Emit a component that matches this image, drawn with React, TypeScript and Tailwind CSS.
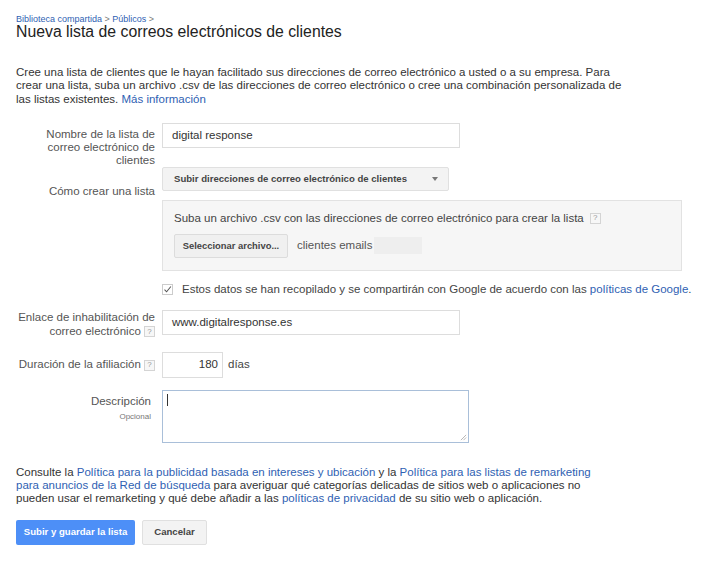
import React from "react";

const Help = () => (
  <span className="inline-flex items-center justify-center w-[11px] h-[11px] border border-[#d4d4d4] bg-[#f7f7f7] text-[8px] leading-none text-[#999] align-middle">
    ?
  </span>
);

export default function App() {
  return (
    <div className="bg-white w-[710px] h-[563px] overflow-hidden px-4 pt-[14px] text-[#333] font-['Liberation_Sans',Arial,sans-serif]">
      {/* Header */}
      <div className="text-[9px] leading-[10px] text-[#2f5fb3]">
        Biblioteca compartida <span className="text-[#777]">&gt;</span> Públicos <span className="text-[#777]">&gt;</span>
      </div>
      <h1 className="text-[15.8px] leading-[16px] text-[#222]">Nueva lista de correos electrónicos de clientes</h1>

      <p className="mt-[26px] text-[11.5px] leading-[13.3px] whitespace-nowrap">
        Cree una lista de clientes que le hayan facilitado sus direcciones de correo electrónico a usted o a su empresa. Para
        <br />
        crear una lista, suba un archivo .csv de las direcciones de correo electrónico o cree una combinación personalizada de
        <br />
        las listas existentes. <span className="text-[#2f5fb3]">Más información</span>
      </p>

      {/* Form */}
      <div className="mt-[17px] flex flex-col text-[11.5px]">
        <div className="flex">
          <div className="w-[139px] text-right text-[#555] leading-[13px] pt-[5px]">
            Nombre de la lista de
            <br />
            correo electrónico de
            <br />
            clientes
          </div>
          <div className="ml-[7px] w-[298px] h-[25px] border border-[#ddd] flex items-center px-[9px] text-[#333]">
            digital response
          </div>
        </div>

        <div className="flex">
          <div className="w-[139px] text-right text-[#555] leading-[13px] pt-[18px]">Cómo crear una lista</div>
          <div className="ml-[7px] flex flex-col">
            <div className="w-[287px] h-[24px] bg-[#f3f3f3] border border-[#e0e0e0] rounded-[2px] flex items-center justify-between pl-[11px] pr-[10px] text-[9.6px] font-bold text-[#444]">
              <span>Subir direcciones de correo electrónico de clientes</span>
              <span className="w-0 h-0 border-l-[3px] border-r-[3px] border-t-[4px] border-l-transparent border-r-transparent border-t-[#777]" />
            </div>
            <div className="mt-[9px] w-[520px] h-[71px] bg-[#f6f6f6] border border-[#e2e2e2] pl-[11px] pt-[11px]">
              <div className="flex items-center gap-[6px] leading-[13px] text-[#444]">
                <span>Suba un archivo .csv con las direcciones de correo electrónico para crear la lista</span>
                <Help />
              </div>
              <div className="mt-[9px] flex items-center">
                <div className="w-[114px] h-[24px] bg-[#f0f0f0] border border-[#dcdcdc] rounded-[2px] flex items-center justify-center text-[9.4px] font-bold text-[#444] whitespace-nowrap">
                  Seleccionar archivo...
                </div>
                <span className="ml-[9px] text-[#555]">clientes emails</span>
                <span className="ml-[2px] w-[48px] h-[17px] bg-[#eeeeee]" />
              </div>
            </div>
          </div>
        </div>

        <div className="flex items-center h-[14px] mt-[12px] ml-[146px]">
          <span className="w-[11px] h-[11px] border border-[#ccc] bg-white flex items-center justify-center">
            <svg viewBox="0 0 12 12" className="w-[11px] h-[11px]">
              <path d="M2 6.2 L4.8 9 L10.5 2" fill="none" stroke="#555" strokeWidth="1.4" />
            </svg>
          </span>
          <span className="ml-[9px] text-[#444] whitespace-nowrap">
            Estos datos se han recopilado y se compartirán con Google de acuerdo con las{" "}
            <span className="text-[#2f5fb3]">políticas de Google</span>.
          </span>
        </div>

        <div className="flex mt-[13px]">
          <div className="w-[139px] text-right text-[#555] leading-[14px]">
            Enlace de inhabilitación de
            <br />
            correo electrónico <Help />
          </div>
          <div className="ml-[7px] w-[298px] h-[25px] border border-[#ddd] flex items-center px-[9px] text-[#333]">
            www.digitalresponse.es
          </div>
        </div>

        <div className="flex items-center mt-[14px]">
          <div className="w-[139px] text-right text-[#555] whitespace-nowrap">
            Duración de la afiliación <Help />
          </div>
          <div className="ml-[7px] w-[61px] h-[26px] border border-[#ddd] flex items-center justify-end pr-[4px] text-[#333]">
            180
          </div>
          <span className="ml-[5px] text-[#444]">días</span>
        </div>

        <div className="flex mt-[12px]">
          <div className="w-[135px] text-right flex flex-col pt-[5px]">
            <span className="text-[#555] leading-[13px]">Descripción</span>
            <span className="text-[8px] leading-[10px] text-[#777] mt-[4px]">Opcional</span>
          </div>
          <div className="ml-[11px] relative w-[307px] h-[53px] border border-[#a9bfd9]">
            <span className="absolute left-[4px] top-[3px] w-px h-[12px] bg-[#333]" />
            <svg viewBox="0 0 8 8" className="absolute right-[1px] bottom-[1px] w-[7px] h-[7px]">
              <path d="M7 1 L1 7 M7 4 L4 7" stroke="#999" strokeWidth="0.8" />
            </svg>
          </div>
        </div>
      </div>

      <p className="mt-[23px] text-[11.5px] leading-[13.3px] text-[#333] whitespace-nowrap">
        Consulte la <span className="text-[#2f5fb3]">Política para la publicidad basada en intereses y ubicación</span> y la{" "}
        <span className="text-[#2f5fb3]">Política para las listas de remarketing</span>
        <br />
        <span className="text-[#2f5fb3]">para anuncios de la Red de búsqueda</span> para averiguar qué categorías delicadas de sitios web o aplicaciones no
        <br />
        pueden usar el remarketing y qué debe añadir a las <span className="text-[#2f5fb3]">políticas de privacidad</span> de su sitio web o aplicación.
      </p>

      <div className="flex mt-[14px] gap-[7px]">
        <button className="w-[119px] h-[25px] bg-[#4d8ff7] rounded-[2px] text-white text-[9.6px] font-bold whitespace-nowrap">
          Subir y guardar la lista
        </button>
        <button className="w-[65px] h-[25px] bg-[#f3f3f3] border border-[#e0e0e0] rounded-[2px] text-[#444] text-[9.6px] font-bold">
          Cancelar
        </button>
      </div>
    </div>
  );
}
